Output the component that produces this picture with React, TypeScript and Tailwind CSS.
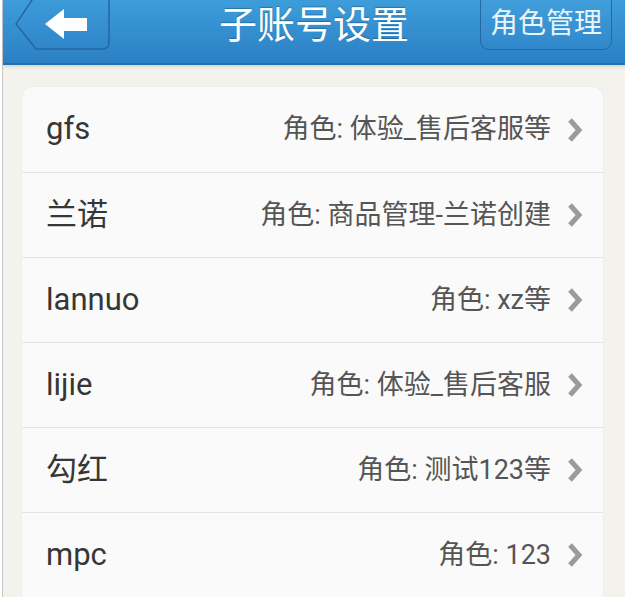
import React from "react";

const accounts = [
  { name: "gfs", role: "角色: 体验_售后客服等" },
  { name: "兰诺", role: "角色: 商品管理-兰诺创建" },
  { name: "lannuo", role: "角色: xz等" },
  { name: "lijie", role: "角色: 体验_售后客服" },
  { name: "勾红", role: "角色: 测试123等" },
  { name: "mpc", role: "角色: 123" },
];

function BackButton() {
  return (
    <svg width="100" height="52" viewBox="0 0 100 52" className="block">
      <defs>
        <linearGradient id="bb" x1="0" y1="0" x2="0" y2="1">
          <stop offset="0" stopColor="#3f9ddb" />
          <stop offset="1" stopColor="#2f86c9" />
        </linearGradient>
      </defs>
      <path
        d="M24 -6 L92 -6 Q97 -6 97 -1 L97 42 Q97 49 90 49 L24 49 L4 24 Z"
        fill="url(#bb)"
        stroke="#2467a3"
        strokeWidth="1.5"
      />
      <path d="M33 24 L52 9 L52 18 L75 18 L75 31 L52 31 L52 39 Z" fill="#ffffff" />
    </svg>
  );
}

function Chevron() {
  return (
    <svg width="20" height="26" viewBox="0 0 20 26" className="block shrink-0">
      <path
        d="M5 3 L14 13 L5 23"
        fill="none"
        stroke="#9b9b9b"
        strokeWidth="5"
        strokeLinejoin="miter"
      />
    </svg>
  );
}

export default function App() {
  return (
    <div
      className="flex h-[597px] w-full overflow-hidden bg-white"
      style={{ fontFamily: '"Roboto", "Noto Sans CJK SC", sans-serif' }}
    >
      <div className="w-[2px] shrink-0 bg-white" />
      <div className="w-[1px] shrink-0 bg-[#c9c9c9]" />
      <div className="flex min-w-0 flex-1 flex-col bg-[#f4f2ed]">
        <header className="grid h-[65px] shrink-0 grid-cols-3 items-start border-b-2 border-[#2270b0] bg-gradient-to-b from-[#3d9dda] to-[#2b80c4] shadow-[0_2px_3px_rgba(0,0,0,0.12)]">
          <div className="ml-[9px] justify-self-start">
            <BackButton />
          </div>
          <h1 className="justify-self-center whitespace-nowrap pt-[2px] text-[38px] leading-[46px] text-white [text-shadow:0_-1px_1px_rgba(0,0,0,0.25)]">
            子账号设置
          </h1>
          <button className="mr-[13px] mt-[-8px] flex h-[58px] w-[132px] items-end justify-center justify-self-end rounded-[9px] border-[1.5px] border-[#2467a3] bg-gradient-to-b from-[#44a1dd] to-[#3088cb] pb-[8px] text-[28px] leading-[34px] text-[#eaf4fb]">
            角色管理
          </button>
        </header>

        <div className="ml-[19px] mr-[22px] mt-[22px] overflow-hidden rounded-t-[10px] bg-[#fafafa] shadow-[0_0_1px_rgba(0,0,0,0.12)]">
          {accounts.map((a, i) => (
            <div
              key={a.name}
              className={
                "flex h-[85px] items-center justify-between pl-[24px] pr-[18px] " +
                (i > 0 ? "border-t border-[#e4e4e4]" : "")
              }
            >
              <span className="text-[31px] text-[#363636]">{a.name}</span>
              <div className="flex items-center gap-[14px]">
                <span className="text-[27px] text-[#555555]">{a.role}</span>
                <Chevron />
              </div>
            </div>
          ))}
        </div>
      </div>
    </div>
  );
}
